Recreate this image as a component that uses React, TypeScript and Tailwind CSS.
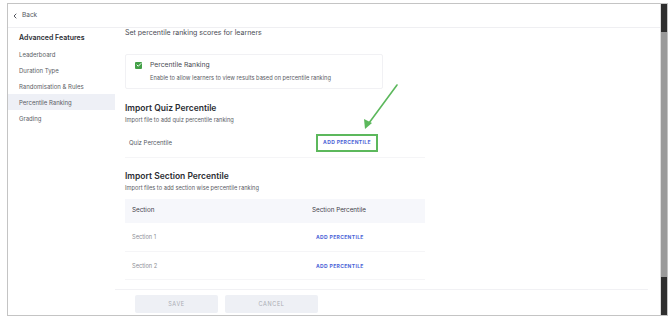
import { Check, ChevronLeft } from 'lucide-react';

const menu = ['Leaderboard', 'Duration Type', 'Randomisation & Rules', 'Percentile Ranking', 'Grading'];

function AddButton({ boxed }: { boxed?: boolean }) {
  return (
    <button
      className={
        'h-[18px] text-[5px] font-bold tracking-[0.07em] text-[#4b5fd6] ' +
        (boxed ? 'w-[62px] border-2 border-[#5cb85c]' : 'text-left')
      }
    >
      ADD PERCENTILE
    </button>
  );
}

export default function App() {
  return (
    <div
      className="relative w-[670px] h-[318px] bg-white pt-[3px] pb-[2px] pl-[7px] pr-[2px] text-[#3a3c44]"
      style={{ fontFamily: 'Inter, "Noto Sans", sans-serif' }}
    >
      <div className="flex h-full border border-[#c4c4c4]">
        <div className="flex flex-1 flex-col min-w-0">
          {/* top bar */}
          <div className="flex h-[24px] items-center gap-[3px] border-b border-[#efeff2] pl-[3px] text-[6.5px] text-[#55575f]">
            <ChevronLeft className="h-[8px] w-[8px]" strokeWidth={3} />
            <span>Back</span>
          </div>

          <div className="flex flex-1 min-h-0">
            {/* sidebar */}
            <div className="w-[107px] shrink-0 pt-[2px]">
              <div className="flex h-[16px] items-center px-[11px] text-[7px] font-semibold text-[#2b2d33]">
                Advanced Features
              </div>
              {menu.map((m) => (
                <div
                  key={m}
                  className={
                    'flex h-[16px] items-center px-[11px] text-[6px] text-[#5a5c64] ' +
                    (m === 'Percentile Ranking' ? 'bg-[#eef0f6]' : '')
                  }
                >
                  {m}
                </div>
              ))}
            </div>

            {/* main */}
            <div className="flex flex-1 flex-col min-w-0">
              <div className="flex-1 overflow-hidden pl-[10px]">
                <div className="h-[10px] text-[7px] leading-[10px] text-[#4a4c54]">
                  Set percentile ranking scores for learners
                </div>

                <div className="mt-[16px] w-[258px] rounded-[2px] border border-[#f1f1f4] pl-[9px] pt-[5px] pb-[5px]">
                  <div className="flex h-[10px] items-center gap-[8px]">
                    <span className="flex h-[7px] w-[7px] items-center justify-center rounded-[1px] bg-[#43a047]">
                      <Check className="h-[6px] w-[6px] text-white" strokeWidth={4} />
                    </span>
                    <span className="text-[6.8px] text-[#4a4c54]">Percentile Ranking</span>
                  </div>
                  <div className="mt-[3px] h-[10px] pl-[15px] text-[5.7px] leading-[10px] text-[#5a5c64]">
                    Enable to allow learners to view results based on percentile ranking
                  </div>
                </div>

                <div className="mt-[13px] h-[12px] text-[8.5px] font-semibold leading-[12px] text-[#2b2d33]">
                  Import Quiz Percentile
                </div>
                <div className="mt-[1px] h-[10px] text-[5.7px] leading-[10px] text-[#5a5c64]">
                  Import file to add quiz percentile ranking
                </div>

                <div className="mt-[3px] flex h-[30px] w-[300px] items-center border-b border-[#f5f5f7] pl-[4px]">
                  <span className="w-[187px] text-[6px] text-[#55575f]">Quiz Percentile</span>
                  <AddButton boxed />
                </div>

                <div className="mt-[12px] h-[12px] text-[8.5px] font-semibold leading-[12px] text-[#2b2d33]">
                  Import Section Percentile
                </div>
                <div className="mt-[1px] h-[10px] text-[5.7px] leading-[10px] text-[#5a5c64]">
                  Import files to add section wise percentile ranking
                </div>

                <div className="mt-[6px] w-[300px] text-[6.3px]">
                  <div className="flex h-[24px] items-center bg-[#f6f7fb] pl-[7px] text-[#3f4149]">
                    <span className="w-[180px]">Section</span>
                    <span>Section Percentile</span>
                  </div>
                  {['Section 1', 'Section 2'].map((s) => (
                    <div key={s} className="flex h-[28.5px] items-center border-b border-[#f5f5f7] pl-[7px] pt-[2px]">
                      <span className="w-[184px] text-[5.7px] text-[#8c8e95]">{s}</span>
                      <AddButton />
                    </div>
                  ))}
                </div>
              </div>

              {/* footer */}
              <div className="mr-[12px] flex gap-[7px] border-t border-[#f1f1f4] pl-[20px] pt-[5px] pb-[2px]">
                <button className="h-[18px] w-[83px] rounded-[2px] bg-[#eef0f5] text-[5.5px] tracking-[0.12em] text-[#a9abb2]">
                  SAVE
                </button>
                <button className="h-[18px] w-[93px] rounded-[2px] bg-[#eef0f5] text-[5.5px] tracking-[0.12em] text-[#a9abb2]">
                  CANCEL
                </button>
              </div>
            </div>
          </div>
        </div>

        {/* scrollbar */}
        <div className="flex w-[7px] shrink-0 flex-col border-l border-[#dcdcdc] bg-[#9a9a9a]">
          <div className="h-[28px] bg-[#2e2e2e]" />
          <div className="flex-1" />
          <div className="h-[38px] bg-[#2e2e2e]" />
        </div>
      </div>

      {/* annotation arrow */}
      <svg className="absolute left-0 top-0 pointer-events-none" width="670" height="318">
        <line x1="397" y1="85" x2="369" y2="123" stroke="#5cb85c" strokeWidth="1.6" strokeLinecap="round" />
        <polygon points="365,129 364,119 372,123" fill="#5cb85c" />
      </svg>
    </div>
  );
}
